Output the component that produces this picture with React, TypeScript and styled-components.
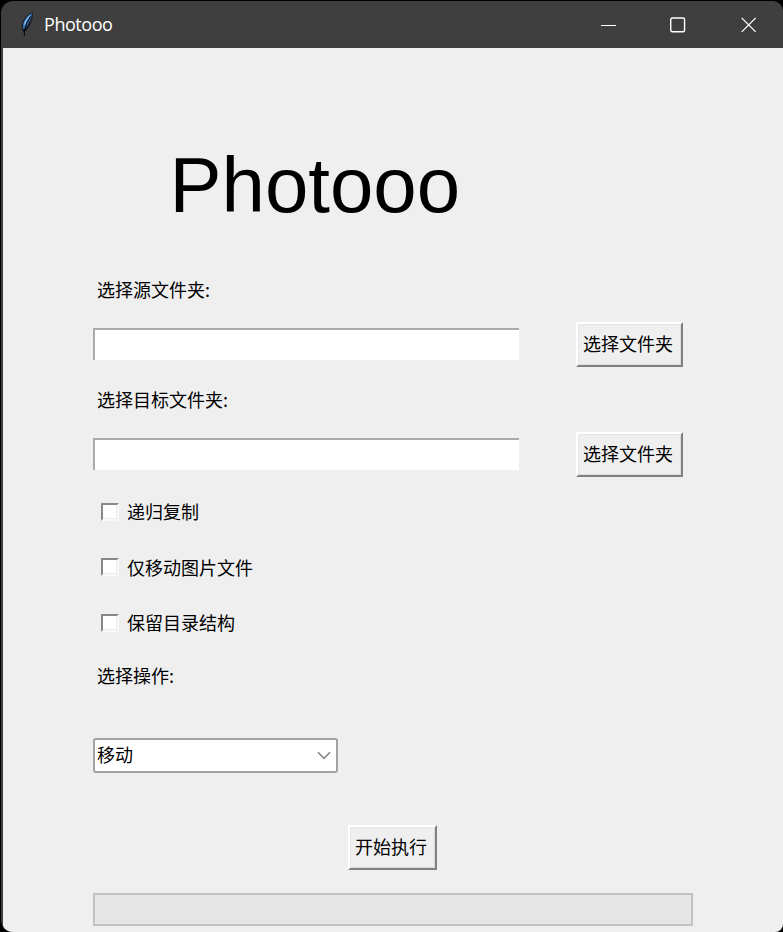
import React from "react";
import styled, { createGlobalStyle } from "styled-components";

const GlobalStyle = createGlobalStyle`
  * { box-sizing: border-box; }
  body { margin: 0; background: #000; overflow: hidden; }
`;

const uiFont = `"Noto Sans CJK SC", sans-serif`;

const Desktop = styled.div`
  width: 783px;
  height: 932px;
  padding: 1px 0 0 1px;
  background: #000;
`;

const Window = styled.div`
  display: flex;
  flex-direction: column;
  width: 782px;
  height: 931px;
  padding-left: 2px;
  border-radius: 12px 10px 8px 12px;
  background: #3f3f3f;
  overflow: hidden;
`;

const TitleBar = styled.header`
  display: flex;
  align-items: center;
  flex: 0 0 47px;
  padding-left: 16px;
  color: #fff;
`;

const Caption = styled.span`
  flex: 1;
  margin: -1px 0 0 9px;
  font: 18px/24px "Open Sans", sans-serif;
  letter-spacing: -0.45px;
`;

const WindowButton = styled.button<{ $width: number }>`
  display: flex;
  align-items: center;
  justify-content: center;
  width: ${(p) => p.$width}px;
  height: 47px;
  padding: 0 0 0 2px;
  border: 0;
  background: transparent;
  color: #fff;
`;

const Content = styled.main`
  display: flex;
  flex-direction: column;
  flex: 1;
  padding-left: 90px;
  border-bottom-left-radius: 7px;
  background: #efefef;
  color: #000;
  font: 18px/26px ${uiFont};
`;

const Heading = styled.h1`
  height: 92px;
  margin: 91px 0 0 76.5px;
  font: 400 78px/93px "Liberation Sans", Arial, sans-serif;
`;

const Label = styled.div<{ $top: number }>`
  height: 26px;
  margin: ${(p) => p.$top}px 0 0 4px;
  line-height: 24px;
  white-space: nowrap;
`;

const FolderRow = styled.div<{ $top: number }>`
  display: flex;
  align-items: flex-start;
  gap: 57px;
  height: 45px;
  margin-top: ${(p) => p.$top}px;
`;

const PathInput = styled.input`
  width: 426px;
  height: 32px;
  margin-top: 6px;
  padding: 0 4px;
  border: 0 solid #aaa;
  border-width: 2px 0 0 2px;
  background: #fff;
  font: 18px ${uiFont};
  outline: none;
`;

const RaisedButton = styled.button<{ $width: number }>`
  width: ${(p) => p.$width}px;
  height: 45px;
  padding: 0 3px 3px 0;
  border: 2px solid;
  border-color: #fff #808080 #808080 #fff;
  background: #efefef;
  box-shadow: inset 1px 1px 0 #e6e6e6, inset -1px -1px 0 #dcdcdc;
  color: #000;
  font: 18px/26px ${uiFont};
  white-space: nowrap;
`;

const Options = styled.div`
  display: grid;
  grid-auto-rows: 55.5px;
  margin: 7px 0 0 8px;
`;

const Option = styled.label`
  display: flex;
  align-items: center;
  gap: 8px;
`;

const OptionText = styled.span`
  margin-top: -1px;
`;

const CheckBox = styled.input.attrs({ type: "checkbox" })`
  appearance: none;
  flex: none;
  width: 18px;
  height: 18px;
  margin: 0;
  border: 2px solid;
  border-color: #888 #f8f8f8 #f8f8f8 #888;
  background: #fff;
  box-shadow: inset -1px -1px 0 #ececec;
`;

const Combo = styled.div`
  display: flex;
  align-items: center;
  justify-content: space-between;
  width: 245px;
  height: 35px;
  margin-top: 49px;
  padding: 0 5px 0 3px;
  border: 2px solid #a2a2a2;
  border-radius: 3px;
  background: #fff;
`;

const ComboValue = styled.span`
  margin: -2px 0 0 -1px;
`;

const RunRow = styled.div`
  height: 45px;
  margin: 52px 0 0 255px;
`;

const Progress = styled.div`
  width: 600px;
  height: 33px;
  margin-top: 23px;
  border: 2px solid #c2c2c2;
  background: #e5e5e5;
`;

const Feather = () => (
  <svg width="16" height="26" viewBox="0 0 16 26" fill="none">
    <path d="M13.4 .8C9 2.2 4 7 3.1 13.5L3.5 19l1.7 1 3.4-3.5 2.4-4.4 2.1-6.3.3-5Z" fill="#14181e" stroke="#202225" strokeWidth="1" />
    <path d="M12.9 1.3C8.7 3.2 4.6 8 3.9 13.5l.5 4L7.9 14.5l1.8-3.5 2.3-4.6.9-5.1Z" fill="#3678c1" />
    <path d="M12 2.4C8.4 4.8 5.6 9 4.9 13.3l1.5-1 1.7-4.3 3.9-5.6Z" fill="#a5cff2" />
    <path d="M11.6 4.5 7.5 11.5 5.4 20v3.7" stroke="#08090b" strokeWidth="1.1" />
  </svg>
);

const FolderField = ({ label, labelTop, rowTop }: { label: string; labelTop: number; rowTop: number }) => (
  <>
    <Label $top={labelTop}>{label}</Label>
    <FolderRow $top={rowTop}>
      <PathInput aria-label={label} />
      <RaisedButton $width={107}>选择文件夹</RaisedButton>
    </FolderRow>
  </>
);

export default function App() {
  return (
    <Desktop>
      <GlobalStyle />
      <Window>
        <TitleBar>
          <Feather />
          <Caption>Photooo</Caption>
          <WindowButton $width={69} aria-label="最小化">
            <svg width="16" height="16"><path d="M0 8.5h15" stroke="currentColor" /></svg>
          </WindowButton>
          <WindowButton $width={70} aria-label="最大化">
            <svg width="16" height="16" fill="none"><rect x=".75" y="1" width="13.8" height="13.8" rx="1.5" stroke="currentColor" strokeWidth="1.4" /></svg>
          </WindowButton>
          <WindowButton $width={71} aria-label="关闭">
            <svg width="16" height="16"><path d="m.7.9 14 14m0-14-14 14" stroke="currentColor" strokeWidth="1.3" /></svg>
          </WindowButton>
        </TitleBar>
        <Content>
          <Heading>Photooo</Heading>
          <FolderField label="选择源文件夹:" labelTop={46} rowTop={19} />
          <FolderField label="选择目标文件夹:" labelTop={20} rowTop={19} />
          <Options>
            {["递归复制", "仅移动图片文件", "保留目录结构"].map((text) => (
              <Option key={text}>
                <CheckBox />
                <OptionText>{text}</OptionText>
              </Option>
            ))}
          </Options>
          <Label $top={12}>选择操作:</Label>
          <Combo>
            <ComboValue>移动</ComboValue>
            <svg width="14" height="9" fill="none"><path d="m1 1.3 6 6 6-6" stroke="#858585" strokeWidth="1.6" /></svg>
          </Combo>
          <RunRow>
            <RaisedButton $width={89}>开始执行</RaisedButton>
          </RunRow>
          <Progress />
        </Content>
      </Window>
    </Desktop>
  );
}
